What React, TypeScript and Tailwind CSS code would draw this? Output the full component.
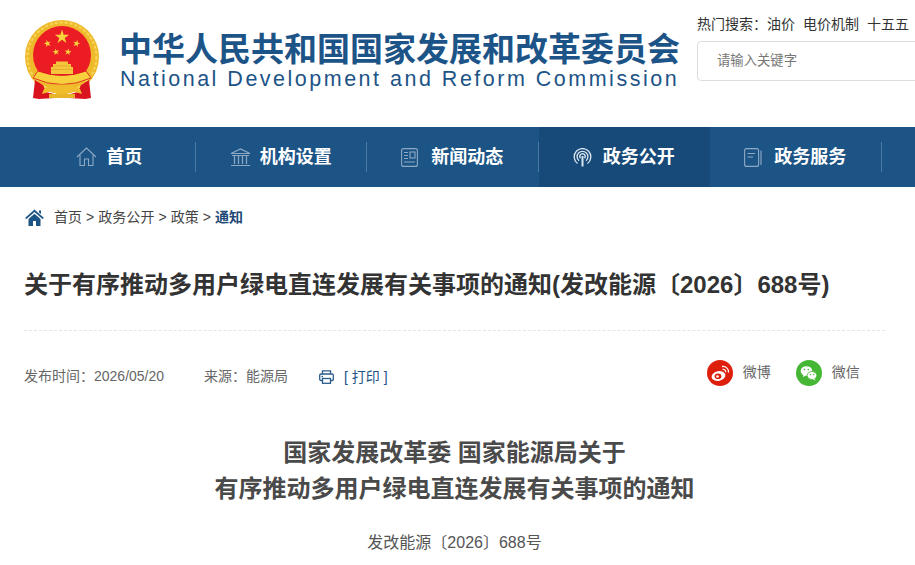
import React from "react";

const sans = `"Liberation Sans","Noto Sans CJK SC",sans-serif`;

function Emblem() {
  const star = (cx: number, cy: number, r: number, rot = 0) => {
    const pts: string[] = [];
    for (let i = 0; i < 10; i++) {
      const a = ((-90 + rot + i * 36) * Math.PI) / 180;
      const rr = i % 2 ? r * 0.38 : r;
      pts.push(`${(cx + rr * Math.cos(a)).toFixed(2)},${(cy + rr * Math.sin(a)).toFixed(2)}`);
    }
    return <polygon points={pts.join(" ")} fill="#f7d33c" />;
  };
  return (
    <svg width="76" height="82" viewBox="0 0 76 82" className="shrink-0">
      <circle cx="37" cy="37" r="37" fill="#eeb92b" />
      <circle cx="37" cy="37" r="34.5" fill="none" stroke="#f8d659" strokeWidth="2" strokeDasharray="3 2" />
      <circle cx="37" cy="35" r="29" fill="#ec1c24" />
      {star(37, 17, 7.5)}
      {star(22.5, 23.5, 3.8, -15)}
      {star(51.5, 23.5, 3.8, 15)}
      {star(31, 32, 3.6, -10)}
      {star(43, 32, 3.6, 10)}
      <path d="M26 54 V47 H28 V44 H31 V41.5 H43 V44 H46 V47 H48 V54Z" fill="#f3c63c" />
      <path d="M29 46 H45 M27 49.5 H47" stroke="#e39a26" strokeWidth="0.6" />
      <path d="M13 51 Q37 60 61 51 L66 58 Q37 71 8 58Z" fill="#f8cf3c" stroke="#d9141e" strokeWidth="0.8" />
      <path d="M10 60 L18 65 L21 72 L33 75 L30 78 L14 79 L8 78Z" fill="#d9141e" />
      <path d="M64 60 L56 65 L53 72 L41 75 L44 78 L60 79 L66 78Z" fill="#d9141e" />
      <path d="M19 69 Q37 60 55 69 L57 74 L47 71 L37 77 L27 71 L17 74Z" fill="#f2bd2c" />
      <path d="M24 74 H50 V78 H24Z" fill="#e8b42a" />
    </svg>
  );
}

const HomeIcon = () => (
  <svg width="21" height="20" viewBox="0 0 21 20" fill="none" stroke="#8fa9c4" strokeWidth="1.1">
    <path d="M1 10 L10.5 1 L20 10" />
    <path d="M4 8 V18.5 H8.5 V12 H12.5 V18.5 H17 V8" />
  </svg>
);
const BankIcon = () => (
  <svg width="21" height="19" viewBox="0 0 21 19" fill="none" stroke="#8fa9c4" strokeWidth="1.2">
    <path d="M1 5.5 L10.5 1 L20 5.5Z" />
    <path d="M2 7.5 H19 M4.5 8 V16 M8.5 8 V16 M12.5 8 V16 M16.5 8 V16 M1 17.5 H20" />
  </svg>
);
const NewsIcon = () => (
  <svg width="17" height="19" viewBox="0 0 17 19" fill="none" stroke="#8fa9c4" strokeWidth="1.1">
    <rect x="0.6" y="0.6" width="15.8" height="17.8" rx="2" />
    <path d="M3 4.5 H7 M3 7.5 H7 M3 10.5 H7 M3 14 H14" />
    <rect x="9" y="4" width="5" height="6" />
  </svg>
);
const SignalIcon = () => (
  <svg width="19" height="19" viewBox="0 0 19 19" fill="none" stroke="#dbe5ef" strokeWidth="1.3">
    <path d="M4.5 15.5 A8.3 8.3 0 1 1 14.5 15.5" />
    <path d="M6 12.8 A5.4 5.4 0 1 1 13 12.8" />
    <path d="M7.5 10.3 A2.7 2.7 0 1 1 11.5 10.3" />
    <path d="M9.5 8 V18.5" strokeWidth="2" />
  </svg>
);
const BookIcon = () => (
  <svg width="18" height="19" viewBox="0 0 18 19" fill="none" stroke="#8fa9c4" strokeWidth="1.1">
    <rect x="0.6" y="0.6" width="14" height="17.8" rx="2" />
    <path d="M3.5 5.5 H11 M3.5 9 H9 M17 2.5 V17" />
  </svg>
);

const navItems = [
  { label: "首页", icon: <HomeIcon />, gap: "gap-[9px]" },
  { label: "机构设置", icon: <BankIcon />, gap: "gap-[9px]" },
  { label: "新闻动态", icon: <NewsIcon />, gap: "gap-[13px]" },
  { label: "政务公开", icon: <SignalIcon />, gap: "gap-[11px]", active: true },
  { label: "政务服务", icon: <BookIcon />, gap: "gap-[12px]" },
];

const PrintIcon = () => (
  <svg width="15" height="14" viewBox="0 0 15 14" fill="none" stroke="#2a5c8c" strokeWidth="1.3">
    <path d="M3.5 4 V0.8 H11.5 V4" />
    <rect x="0.7" y="4" width="13.6" height="6.5" rx="1.2" />
    <rect x="3.5" y="8.5" width="8" height="4.8" fill="#fff" />
    <path d="M2.5 6.5 H4" />
  </svg>
);

const WeiboIcon = () => (
  <svg width="26" height="26" viewBox="0 0 26 26" className="shrink-0">
    <circle cx="13" cy="13" r="13" fill="#de1f0b" />
    <ellipse cx="11.5" cy="16" rx="7" ry="4.8" fill="#fff" transform="rotate(-12 11.5 16)" />
    <ellipse cx="11" cy="16.3" rx="3.4" ry="2.8" fill="#de1f0b" />
    <circle cx="10.5" cy="16.5" r="1.3" fill="#fff" />
    <path d="M15 6.5 A5.5 5.5 0 0 1 21.5 12.5" fill="none" stroke="#fff" strokeWidth="1.3" />
    <path d="M15.5 9.3 A2.8 2.8 0 0 1 18.7 12.3" fill="none" stroke="#fff" strokeWidth="1.2" />
  </svg>
);
const WechatIcon = () => (
  <svg width="26" height="26" viewBox="0 0 26 26" className="shrink-0">
    <circle cx="13" cy="13" r="13" fill="#45b734" />
    <ellipse cx="10.5" cy="11" rx="5.8" ry="4.8" fill="#fff" />
    <path d="M7.5 14.5 L7 17 L10 15.5Z" fill="#fff" />
    <ellipse cx="16" cy="15.5" rx="4.8" ry="4" fill="#fff" stroke="#45b734" strokeWidth="0.8" />
    <path d="M18.5 18.5 L19.5 20.5 L16.5 19Z" fill="#fff" />
    <circle cx="8.5" cy="9.5" r="0.8" fill="#45b734" />
    <circle cx="12.3" cy="9.5" r="0.8" fill="#45b734" />
    <circle cx="14.5" cy="14.5" r="0.7" fill="#45b734" />
    <circle cx="17.7" cy="14.5" r="0.7" fill="#45b734" />
  </svg>
);

export default function App() {
  return (
    <div className="w-[915px] h-[565px] overflow-hidden bg-white" style={{ fontFamily: sans }}>
      <header className="h-[127px] flex items-start pl-[25px]">
        <div className="mt-[20px]"><Emblem /></div>
        <div className="ml-[18px] mt-[31px] w-[560px] text-[#1d5487] shrink-0">
          <div className="text-[33px] leading-[38px] font-bold whitespace-nowrap">中华人民共和国国家发展和改革委员会</div>
          <div className="ml-[1px] text-[21.5px] leading-[20px] whitespace-nowrap tracking-[2.5px]">National Development and Reform Commission</div>
        </div>
        <div className="ml-[18px] mt-[15px] w-[240px] shrink-0">
          <div className="flex text-[14px] leading-[18px] text-[#333] whitespace-nowrap">
            <span>热门搜索：</span>
            <span>油价</span>
            <span className="ml-[8px]">电价机制</span>
            <span className="ml-[8px]">十五五</span>
          </div>
          <div className="mt-[8px] h-[40px] w-[240px] border border-[#ddd] rounded-[4px] pl-[19px] flex items-center text-[13.33px] text-[#777]">
            请输入关键字
          </div>
        </div>
      </header>

      <nav className="h-[60px] bg-[#1c5486] pl-[24px] flex">
        {navItems.map((n) => (
          <div
            key={n.label}
            className={`relative w-[171.5px] h-full flex items-center justify-center ${n.gap} ${n.active ? "bg-[#174a78]" : ""}`}
          >
            <span className="-ml-[1px] flex">{n.icon}</span>
            <span className="text-[18px] font-bold text-white whitespace-nowrap">{n.label}</span>
            {!n.active && <span className="absolute right-0 top-[15px] h-[30px] w-px bg-[#4b7aa3]" />}
          </div>
        ))}
      </nav>

      <main className="px-[24px]">
        <div className="mt-[21px] h-[18px] flex items-center text-[14px] text-[#444] whitespace-nowrap">
          <svg width="19" height="17" viewBox="0 0 19 17" className="ml-[1px] mr-[10px] shrink-0" fill="#1c5486">
            <path d="M9.5 0.5 L19 9 L17.5 10 L9.5 3 L1.5 10 L0 9Z" />
            <path d="M14 1.5 H16 V5 L14 3.5Z" />
            <path d="M3.5 10 L9.5 4.8 L15.5 10 V17 H11 V12 H8 V17 H3.5Z" />
          </svg>
          <span className="tracking-[0.06px]">首页 &gt; 政务公开 &gt; 政策 &gt; </span>
          <span className="ml-[4px] font-bold text-[#1f4a75]">通知</span>
        </div>

        <h1 className="mt-[43px] text-[24px] leading-[32px] font-bold text-[#333] whitespace-nowrap">
          关于有序推动多用户绿电直连发展有关事项的通知(发改能源〔2026〕688号)
        </h1>

        <div className="mt-[29px] w-[861px] border-t border-dashed border-[#e5e5e5]" />

        <div className="mt-[28px] h-[28px] flex items-center text-[14px] text-[#666] whitespace-nowrap">
          <span className="mt-[6px]">发布时间：2026/05/20</span>
          <span className="ml-[40px] mt-[6px]">来源：能源局</span>
          <span className="ml-[31px] mt-[8px] flex items-center">
            <PrintIcon />
            <span className="ml-[10px] text-[#1c5486]">[ 打印 ]</span>
          </span>
          <span className="ml-[319px] flex items-center gap-[10px] mt-[-1px]"><WeiboIcon />微博</span>
          <span className="ml-[25px] flex items-center gap-[10px] mt-[-1px]"><WechatIcon />微信</span>
        </div>

        <div className="mt-[48px] w-[861px] text-center text-[24px] leading-[36px] font-bold text-[#4a4a4a]">
          <div>国家发展改革委 国家能源局关于</div>
          <div>有序推动多用户绿电直连发展有关事项的通知</div>
        </div>

        <div className="mt-[22px] w-[861px] text-center text-[16px] leading-[28px] text-[#555]">发改能源〔2026〕688号</div>
      </main>
    </div>
  );
}
